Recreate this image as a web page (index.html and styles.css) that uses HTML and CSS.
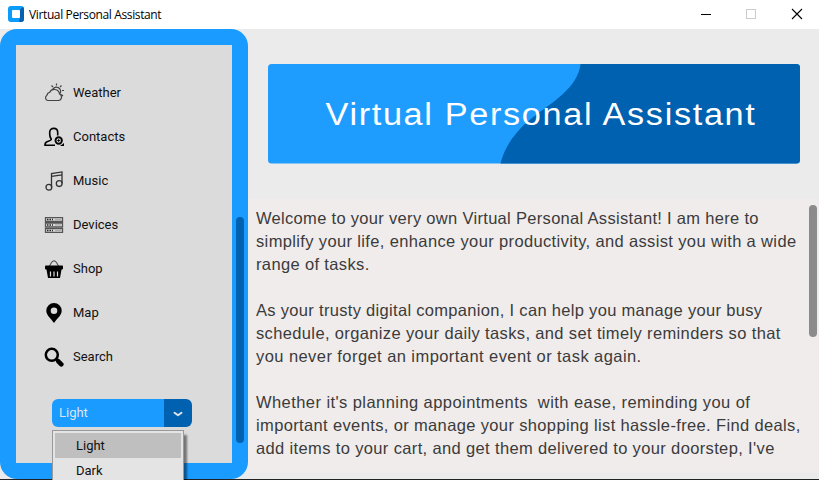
FILE: index.html
```html
<!DOCTYPE html>
<html lang="en">
<head>
<meta charset="utf-8">
<title>Virtual Personal Assistant</title>
<link rel="stylesheet" href="styles.css">
</head>
<body>
<div class="window">
  <header class="titlebar">
    <svg class="app-icon" width="16" height="16" viewBox="0 0 16 16"><rect width="16" height="16" rx="3" fill="#0a9bfb"/><path d="M12 3.500L15 1Q16 2 16 3V13Q16 16 13 16H11L12 12Z" fill="#0560b0"/><rect x="4" y="4" width="8" height="8" rx="1" fill="#fff"/></svg>
    <span class="title">Virtual Personal Assistant</span>
    <svg class="controls" width="104" height="12" viewBox="0 0 104 12" fill="none"><path d="M0 6.500H10" stroke="#000"/><rect x="45.500" y="1.500" width="9" height="9" stroke="#ccc"/><path d="M91 1L101 11M101 1L91 11" stroke="#000" stroke-width="1.100"/></svg>
  </header>
  <div class="main">
    <aside class="sidebar">
      <div class="panel">
        <nav class="menu">
          <a class="item"><svg width="20" height="20" viewBox="0 0 20 20" fill="none" stroke="#444" stroke-width="1.200"><path d="M3.600 17.500H14.500A3.400 3.400 0 0 0 15.500 11A5.200 5.200 0 0 0 5.600 9.500A3 3 0 0 0 3 12.200A2.900 2.900 0 0 0 3.600 17.500ZM8.500 6.500A4.200 4.200 0 1 1 16.200 10.500M12.500 .5V2.500M7.500 2.500L9 4M17.500 2.500L16 4M18 7.500H20M17.300 11.500L19 13"/></svg><span>Weather</span></a>
          <a class="item"><svg width="20" height="20" viewBox="0 0 20 20" fill="none" stroke="#000" stroke-width="1.600"><path d="M11 18.200H1Q.8 15.500 3.500 14.500Q7.500 13.300 7.300 12C5.500 10.500 5.700 8 5.700 5.500C5.700 0 13.700 0 13.700 5.500V8.500"/><circle cx="14.700" cy="13.500" r="3.200" stroke-width="1.900"/><path d="M13.200 13.500H16.200M14.700 12V15" stroke-width=".9"/><path d="M16 19H20V16Z" fill="#000" stroke="none"/></svg><span>Contacts</span></a>
          <a class="item"><svg width="20" height="20" viewBox="0 0 20 20" fill="none" stroke="#333" stroke-width="1.300"><path d="M7.500 16.500V2.500L18 .9V12.500M7.500 5.400L18 3.800"/><circle cx="4.900" cy="16.300" r="2.900"/><circle cx="15.200" cy="12.600" r="2.900"/></svg><span>Music</span></a>
          <a class="item"><svg width="20" height="20" viewBox="0 0 20 20" fill="none" stroke="#555" stroke-width="1.300"><path d="M1.500 2.700H18.500V6.500H1.500ZM1.500 8H18.500V11.800H1.500ZM1.500 13.500H18.500V17.300H1.500Z"/><path d="M3 4.600H9M3 9.900H9M3 15.400H9" stroke="#222" stroke-width="1.500" stroke-dasharray="1.500 1"/><path d="M11 4.600H17M11 9.900H17M11 15.400H17" stroke="#aaa"/></svg><span>Devices</span></a>
          <a class="item"><svg width="20" height="20" viewBox="0 0 20 20"><path d="M5 8L7.500 3.500Q10 .2 12.500 3.500L15 8" fill="none" stroke="#555" stroke-width="1.200"/><path d="M1.500 6.500H18.500Q19 6.500 19 8V9.500Q19 10.500 18 10.500H2Q1 10.500 1 9.500V8Q1 6.500 1.500 6.500ZM2.500 10.500H17.500L16 19H4Z"/><path d="M6.500 12.500V17.500M10 12.500V17.500M13.500 12.500V17.500" stroke="#ddd" stroke-width="1.200"/></svg><span>Shop</span></a>
          <a class="item"><svg width="20" height="20" viewBox="0 0 20 20"><path fill-rule="evenodd" d="M10 0A7.700 7.700 0 0 1 17.700 7.700C17.700 12 13.500 15 10 20C6.500 15 2.300 12 2.300 7.700A7.700 7.700 0 0 1 10 0ZM10 4.500A3.300 3.300 0 1 0 10 11.100A3.300 3.300 0 0 0 10 4.500Z"/></svg><span>Map</span></a>
          <a class="item"><svg width="20" height="20" viewBox="0 0 20 20" fill="none" stroke="#000"><circle cx="7.800" cy="7.800" r="6" stroke-width="2.500"/><path d="M12 12L14 14" stroke-width="2.500"/><path d="M14.300 14.300L17.300 17.300" stroke-width="4.600" stroke-linecap="round"/></svg><span>Search</span></a>
        </nav>
        <div class="select">
          <span class="value">Light</span>
          <span class="arrow"><svg width="10" height="6" viewBox="0 0 10 6" fill="none" stroke="#dce4ee" stroke-width="2" stroke-linecap="round" stroke-linejoin="round"><path d="M1.500 1.800L5 4.300L8.500 1.800"/></svg></span>
          <div class="dropdown"><div class="option active">Light</div><div class="option">Dark</div></div>
        </div>
      </div>
      <div class="side-thumb"></div>
    </aside>
    <section class="content">
      <svg class="banner" width="532" height="100" viewBox="0 0 532 100">
        <rect width="532" height="99.500" rx="3.500" fill="#1f9dff"/>
        <path d="M312.500 0H528.500Q532 0 532 3.500V96Q532 99.500 528.500 99.500H232.500C236 85 246 68 264 54C283 39 310 24 312.500 0Z" fill="#0061b0"/>
        <text class="banner-text" x="57.500" y="61" textLength="431" lengthAdjust="spacingAndGlyphs">Virtual Personal Assistant</text>
      </svg>
      <div class="textbox">
        <div class="copy">
          <p><span class="t1">Welcome to your very own Virtual Personal Assistant! I am here to</span><br><span class="t2">simplify your life, enhance your productivity, and assist you with a wide</span><br><span class="t2">range of tasks.</span></p>
          <p><span class="t1">As your trusty digital companion, I can help you manage your busy</span><br><span class="t2">schedule, organize your daily tasks, and set timely reminders so that</span><br><span class="t3">you never forget an important event or task again.</span></p>
          <p><span class="t3">Whether it's planning appointments&nbsp; with ease, reminding you of</span><br><span class="t2">important events, or manage your shopping list hassle-free. Find deals,</span><br><span class="t2">add items to your cart, and get them delivered to your doorstep, I've</span></p>
        </div>
        <div class="text-thumb"></div>
      </div>
    </section>
  </div>
</div>
</body>
</html>
```
FILE: styles.css
```css
* { box-sizing: border-box; }
body { margin: 0; background: #ebebeb; overflow: hidden; }
.window { width: 819px; height: 480px; display: flex; flex-direction: column; background: linear-gradient(#ebebeb 479px, #222 479px); overflow: hidden; }
.titlebar { height: 29px; flex: none; background: #fff; display: flex; align-items: center; padding: 0 14px 2px 8px; }
.title { margin-left: 5px; font: 12px/16px "Open Sans", "Noto Sans", sans-serif; letter-spacing: -0.37px; color: #000; white-space: nowrap; position: relative; top: 1px; }
.controls { margin-left: auto; }
.main { display: flex; height: 450px; }
.sidebar { width: 248px; flex: none; background: #1a9bff; border-radius: 17px; padding: 16px 4px 16px 16px; display: flex; justify-content: space-between; }
.panel { width: 216px; height: 418px; background: #dbdbdb; padding: 26px 0 0 28px; }
.item { display: flex; align-items: center; height: 44px; gap: 9px; font: 13px/16px Roboto, sans-serif; color: #111; }
.select { position: relative; display: flex; width: 140px; height: 28px; margin: 20px 0 0 8px; border-radius: 6px; background: linear-gradient(90deg, #1a9bff 112px, #0061b0 112px); font: 13px/28px Roboto, sans-serif; color: #dce4ee; }
.value { width: 112px; padding-left: 7px; }
.arrow { width: 28px; display: flex; align-items: center; justify-content: center; padding-top: 1px; }
.dropdown { position: absolute; left: 0; top: 31px; width: 132px; height: 70px; border: 1px solid #999; background: #e4e4e4; box-shadow: 3px 5px 2px #0007; padding: 2px; color: #111; }
.option { height: 25px; line-height: 25px; padding-left: 21px; }
.active { background: #bfbfbf; }
.side-thumb { width: 8px; height: 226px; margin-top: 172px; border-radius: 4px; background: #0061b0; }
.content { flex: 1; display: flex; flex-direction: column; }
.banner { margin: 35px 0 0 20px; flex: none; }
.banner-text { font: 31px "Liberation Sans", Arial, sans-serif; letter-spacing: 1.5px; fill: #fff; }
.textbox { height: 274px; margin-top: 35px; background: #f0eceb; display: flex; justify-content: space-between; padding: 6px 2px 0 8px; }
.copy { font: 16.500px/23px "Liberation Sans", Arial, sans-serif; color: #3b3b3b; white-space: nowrap; height: 263px; padding-top: 2px; }
.copy p { margin: 0 0 23px; }
.t1 { letter-spacing: 0.31px; }
.t2 { letter-spacing: 0.36px; }
.t3 { letter-spacing: 0.43px; }
.text-thumb { width: 8px; height: 132px; border-radius: 4px; background: #8b8b8b; }
```
